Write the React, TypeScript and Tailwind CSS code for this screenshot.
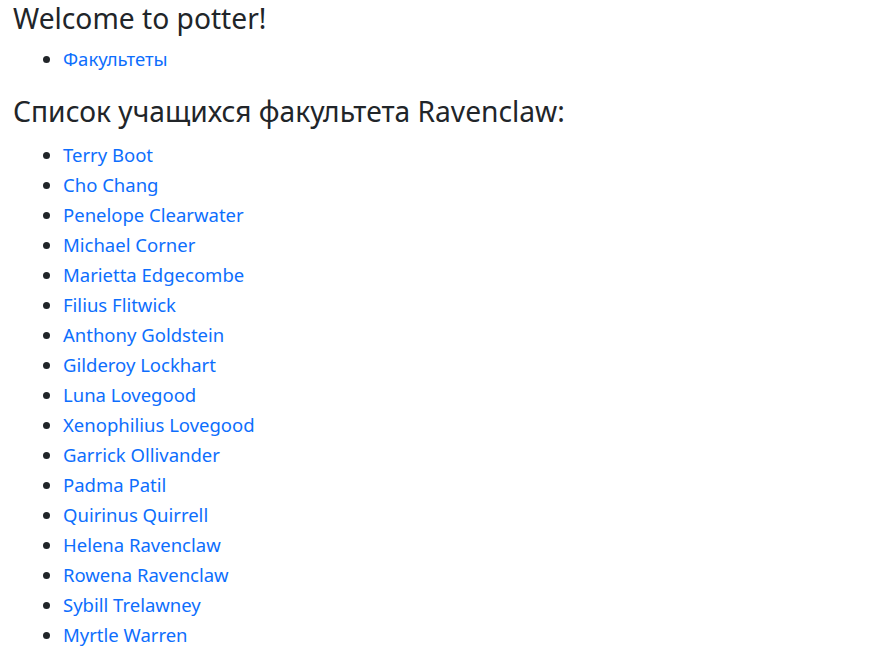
import React from "react";

const students = [
  "Terry Boot",
  "Cho Chang",
  "Penelope Clearwater",
  "Michael Corner",
  "Marietta Edgecombe",
  "Filius Flitwick",
  "Anthony Goldstein",
  "Gilderoy Lockhart",
  "Luna Lovegood",
  "Xenophilius Lovegood",
  "Garrick Ollivander",
  "Padma Patil",
  "Quirinus Quirrell",
  "Helena Ravenclaw",
  "Rowena Ravenclaw",
  "Sybill Trelawney",
  "Myrtle Warren",
];

const App = () => {
  return (
    <div
      className="min-h-screen bg-white text-[#212529] px-[13px]"
      style={{ fontFamily: '"Noto Sans", "Open Sans", sans-serif' }}
    >
      <h3 className="text-[28.2px] leading-[34px] pt-px mb-[9px]">Welcome to potter!</h3>
      <ul className="list-disc pl-[50px] mb-[19px] text-[18.5px] leading-[30px]">
        <li>
          <a href="#" className="text-[#0d6efd]">
            Факультеты
          </a>
        </li>
      </ul>
      <h3 className="text-[28.2px] leading-[36px] mb-[11px]">
        Список учащихся факультета Ravenclaw:
      </h3>
      <ul className="list-disc pl-[50px] text-[18.5px] leading-[30px]">
        {students.map((name) => (
          <li key={name}>
            <a href="#" className="text-[#0d6efd]">
              {name}
            </a>
          </li>
        ))}
      </ul>
    </div>
  );
};

export default App;
